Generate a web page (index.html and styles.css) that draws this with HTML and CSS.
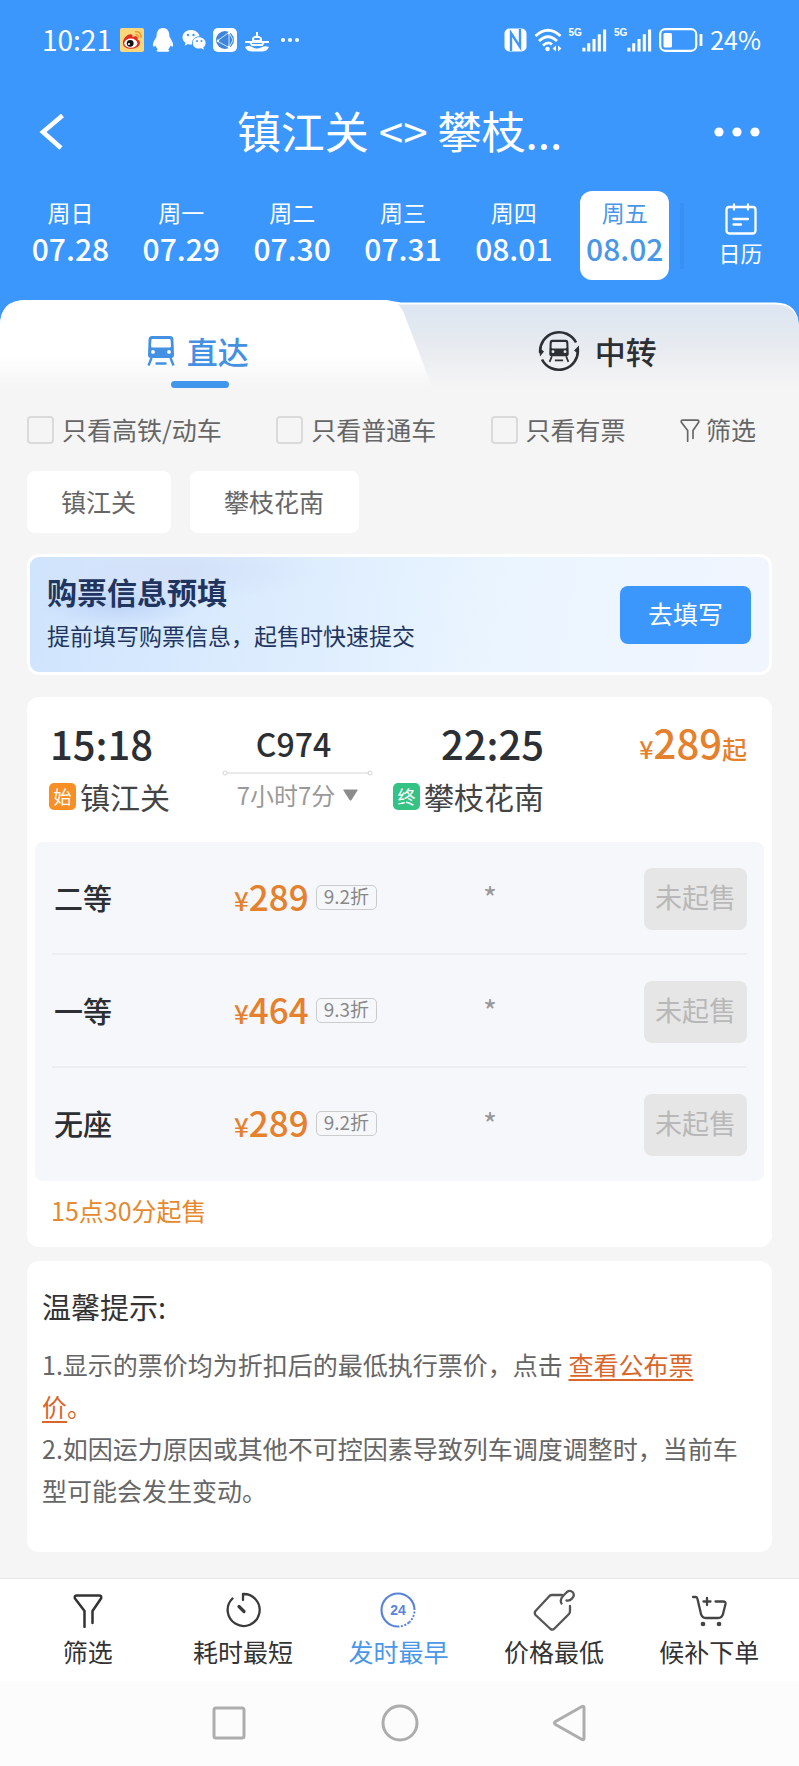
FILE: index.html
```html
<!DOCTYPE html>
<html lang="zh-CN">
<head>
<meta charset="utf-8">
<meta name="viewport" content="width=device-width, initial-scale=1">
<title>镇江关 - 攀枝花南 车票查询</title>
<link rel="stylesheet" href="styles.css">
</head>
<body>
<svg class="defs" aria-hidden="true">
  <symbol id="funnel" viewBox="0 0 30 34">
    <path d="M11.500 33V17L2 4.500Q1 1.500 4 1.500H26Q29 1.500 28 4.500L19.500 17V29" fill="none" stroke="currentColor" stroke-width="2.500" stroke-linecap="round" stroke-linejoin="round"/>
  </symbol>
  <symbol id="train" viewBox="0 0 28 30">
    <path fill="currentColor" fill-rule="evenodd" d="M5 0H23Q26 0 26.400 3L27 19Q27 22 24 22H4Q1 22 1 19L1.600 3Q2 0 5 0ZM5.500 3Q4.500 3 4.400 4L4 10Q4 11.500 5.500 11.500H22.500Q24 11.500 24 10L23.600 4Q23.500 3 22.500 3ZM6 14A1.900 1.900 0 1 0 6 17.800A1.900 1.900 0 1 0 6 14ZM22 14A1.900 1.900 0 1 0 22 17.800A1.900 1.900 0 1 0 22 14Z"/>
    <path d="M4.500 22L1.500 29.500M23.500 22L26.500 29.500M8.500 27.500H19.500" stroke="currentColor" stroke-width="2.400" fill="none"/>
  </symbol>
  <symbol id="signal" viewBox="0 0 26 24">
    <path d="M2 20V24M7 15.500V24M12.500 11V24M18 6V24M23.500 1V24" stroke="#fff" stroke-width="3.200"/>
  </symbol>
</svg>

<header class="header">
  <div class="status">
    <span class="clock">10:21</span>
    <div class="status-apps">
      <svg width="24" height="24" viewBox="0 0 24 24"><rect width="24" height="24" rx="2" fill="#fbd77c"/><path d="M3 16C2 11 8 5 11.500 6.500C13 7 12.500 9 12.500 9C16 7.500 18.500 8.500 17.500 11.500C23 14 19 20.500 11.500 20.800C7 21 3.500 19 3 16Z" fill="#e12d20"/><ellipse cx="10.800" cy="15.200" rx="6.500" ry="4.600" fill="#fff"/><circle cx="10.200" cy="15.300" r="3.400" fill="#111"/><circle cx="9" cy="16" r="1.100" fill="#fff"/><path d="M15 3.800Q21.500 3 21 10M15.500 6.500Q18.500 6.500 18.300 9.500" fill="none" stroke="#f09a2a" stroke-width="1.500"/></svg>
      <svg width="24" height="24" viewBox="0 0 24 24"><path d="M12 0C17 0 18.500 4 18.500 9C20 11 22.500 15 22 18C21.500 19.500 20 18 19.500 17.500C19 19.500 18 20.500 17 21.300C19 22 19 23.500 17 23.800H7C5 23.500 5 22 7 21.300C6 20.500 5 19.500 4.500 17.500C4 18 2.500 19.500 2 18C1.500 15 4 11 5.500 9C5.500 4 7 0 12 0Z" fill="#fff"/></svg>
      <svg width="24" height="24" viewBox="0 0 24 24"><path d="M9 2C4 2 .5 5.300 .5 9.300C.5 11.600 1.700 13.500 3.600 14.900L2.700 17.700L6 16Q8 16.700 10 16.500C9.500 11 14 8 17.600 8.200C17 4.600 13.200 2 9 2Z" fill="#fff"/><path d="M17 9.300C13 9.300 10.800 12 10.800 14.900C10.800 18 13.500 20.500 17 20.500L19.300 20.200L22 21.700L21.300 19.300C22.700 18.300 23.600 16.700 23.600 14.900C23.600 12 20.700 9.300 17 9.300Z" fill="#fff"/><g fill="#3c97fd"><circle cx="6" cy="7" r="1.200"/><circle cx="11.500" cy="7" r="1.200"/><circle cx="15" cy="13" r="1"/><circle cx="19.500" cy="13" r="1"/></g></svg>
      <svg width="24" height="24" viewBox="0 0 24 24"><rect width="24" height="24" rx="5" fill="#fff"/><circle cx="12" cy="12" r="9" fill="#3c87dd"/><path d="M4 13L16 4.500V19.500L4 13M16 4.500L20 12L16 19.500" fill="none" stroke="#fff" stroke-width=".8"/><circle cx="5" cy="12.800" r="1.200" fill="#fff"/><circle cx="16" cy="5" r="1.200" fill="#fff"/><circle cx="16" cy="19" r="1.200" fill="#fff"/></svg>
      <svg width="26" height="24" viewBox="0 0 26 24"><path d="M13 4V8M1 14H25M6 14L8 17H18L20 14" fill="none" stroke="#fff" stroke-width="2"/><path d="M8 13V10Q13 5 18 10V13Z" fill="#fff"/><rect x="10" y="10" width="6" height="2" rx="1" fill="#3c97fd"/><path d="M1 19Q5 17 9 19.500Q13 21.500 17 19.500Q21 17.500 25 19Q23 23.500 18 23.500H8Q3 23.500 1 19Z" fill="#fff"/></svg>
      <svg width="26" height="24" viewBox="0 0 26 24"><g fill="#fff"><circle cx="6" cy="12" r="2"/><circle cx="13" cy="12" r="2"/><circle cx="20" cy="12" r="2"/></g></svg>
    </div>
    <div class="status-system">
      <svg width="23" height="24" viewBox="0 0 23 24"><rect x=".5" y=".5" width="22" height="23" rx="5" fill="#fff"/><path d="M7 23V5L16 19V1" fill="none" stroke="#3c97fd" stroke-width="2.400"/></svg>
      <svg width="28" height="24" viewBox="0 0 28 24"><g fill="none" stroke="#fff" stroke-width="2.700"><path d="M1.500 8Q14 -3.500 26.500 8"/><path d="M5 13Q14 4.500 23 13"/><path d="M9 17.500Q14 13 18 16.500"/></g><circle cx="13.500" cy="21" r="2.300" fill="#fff"/><path d="M22 17.500V23.500L18.500 20.500ZM24 17.500V23.500L27.500 20.500Z" fill="#fff"/></svg>
      <span class="cell"><small>5G</small><svg width="25" height="24"><use href="#signal"/></svg></span>
      <span class="cell"><small>5G</small><svg width="25" height="24"><use href="#signal"/></svg></span>
      <svg width="44" height="24" viewBox="0 0 44 24"><rect x="1.200" y="1.200" width="36" height="21.600" rx="5" fill="none" stroke="#fff" stroke-width="2.200"/><rect x="4.500" y="5" width="8.500" height="14.500" rx="1.500" fill="#fff"/><path d="M42 6V18" stroke="#fff" stroke-width="2.800"/></svg>
      <span class="battery">24%</span>
    </div>
  </div>

  <nav class="titlebar">
    <button class="icon-btn" aria-label="返回"><svg width="26" height="36" viewBox="0 0 26 36"><path d="M23.500 1.500L4 18L22 34" fill="none" stroke="#fff" stroke-width="4.600"/></svg></button>
    <h1>镇江关 &lt;&gt; 攀枝...</h1>
    <button class="icon-btn" aria-label="更多"><svg width="46" height="36" viewBox="0 0 46 36"><g fill="#fff"><circle cx="5" cy="18" r="4.600"/><circle cx="23" cy="18" r="4.600"/><circle cx="41" cy="18" r="4.600"/></g></svg></button>
  </nav>

  <div class="dates">
    <button class="date"><span>周日</span><b>07.28</b></button>
    <button class="date"><span>周一</span><b>07.29</b></button>
    <button class="date"><span>周二</span><b>07.30</b></button>
    <button class="date"><span>周三</span><b>07.31</b></button>
    <button class="date"><span>周四</span><b>08.01</b></button>
    <button class="date active"><span>周五</span><b>08.02</b></button>
    <button class="calendar">
      <svg width="32" height="32" viewBox="0 0 32 32" fill="none" stroke="#fff" stroke-width="2.300" stroke-linecap="round"><path d="M4 4H5.500M12.500 4H19.500M26.500 4H28Q30.500 4 30.500 7V27.500Q30.500 30.500 27.500 30.500H4.500Q1.500 30.500 1.500 27.500V7Q1.500 4 4 4M5 4H27M9 1.500V6.500M23 1.500V6.500M8.500 16H23M8.500 21.500H16"/></svg>
      <span>日历</span>
    </button>
  </div>
</header>

<div class="tabs" role="tablist">
  <svg class="tabs-bg" viewBox="0 0 799 92" preserveAspectRatio="none" aria-hidden="true">
    <defs>
      <linearGradient id="idle" x2="0" y2="1"><stop offset=".05" stop-color="#dde6f1"/><stop offset=".5" stop-color="#e8ebf0"/><stop offset=".95" stop-color="#f5f5f5"/></linearGradient>
      <linearGradient id="on" x2="0" y2="1"><stop offset=".6" stop-color="#fff"/><stop offset=".95" stop-color="#f5f5f5"/></linearGradient>
    </defs>
    <path d="M0 92V26Q0 0 26 0H385L401 2.500H775Q799 2.500 799 28V92Z" fill="#fff"/>
    <path d="M380 92V4.500H775Q799 4.500 799 30V92Z" fill="url(#idle)"/>
    <path d="M0 92V26Q0 0 26 0H385Q397 0 403 11L434 92Z" fill="url(#on)"/>
  </svg>
  <button class="tab on" role="tab" aria-selected="true"><svg width="28" height="30"><use href="#train"/></svg>直达</button>
  <button class="tab" role="tab" aria-selected="false">
    <svg width="42" height="42" viewBox="0 0 42 42"><g fill="none" stroke="#2c2f33" stroke-width="2.600"><path d="M2.200 23A19 19 0 0 1 38 12.500"/><path d="M39.800 19A19 19 0 0 1 4 29.500"/></g><path d="M1 17.500L6 21.500L2 26.500ZM41 24.500L36 20.500L41 15.500Z" fill="#2c2f33"/><svg x="10.500" y="9" width="21" height="24" color="#2c2f33"><use href="#train"/></svg></svg>中转</button>
</div>

<main class="main">
  <div class="filters">
    <label><input type="checkbox"><span>只看高铁/动车</span></label>
    <label><input type="checkbox"><span>只看普通车</span></label>
    <label><input type="checkbox"><span>只看有票</span></label>
    <button class="filter-btn"><svg width="20" height="23"><use href="#funnel"/></svg><span>筛选</span></button>
  </div>

  <div class="chips">
    <button class="chip">镇江关</button>
    <button class="chip">攀枝花南</button>
  </div>

  <section class="banner">
    <div>
      <h2>购票信息预填</h2>
      <p>提前填写购票信息，起售时快速提交</p>
    </div>
    <button class="primary">去填写</button>
  </section>

  <section class="card trip">
    <div class="trip-head">
      <div class="stop">
        <span class="time">15:18</span>
        <span class="station"><i class="mark start">始</i>镇江关</span>
      </div>
      <div class="train">
        <span class="train-no">C974</span>
        <svg class="line" viewBox="0 0 151 6" preserveAspectRatio="none" aria-hidden="true"><g fill="#fff" stroke="#d4d4d4"><path d="M5 3H146"/><circle cx="3" cy="3" r="2"/><circle cx="148" cy="3" r="2"/></g></svg>
        <button class="duration">7小时7分<svg width="15" height="12" viewBox="0 0 15 12"><path d="M1 .5H14Q15 .5 14.500 1.500L8.500 11Q7.500 12 6.500 11L.5 1.500Q0 .5 1 .5Z" fill="#8c8c8c"/></svg></button>
      </div>
      <div class="stop end">
        <span class="time">22:25</span>
        <span class="station"><i class="mark final">终</i>攀枝花南</span>
      </div>
      <div class="from"><small>¥</small>289<em>起</em></div>
    </div>

    <table class="seats">
      <tbody>
        <tr><th scope="row">二等</th><td class="fare"><div><small>¥</small>289<span class="tag">9.2折</span></div></td><td class="left">*</td><td class="act"><button disabled>未起售</button></td></tr>
        <tr><th scope="row">一等</th><td class="fare"><div><small>¥</small>464<span class="tag">9.3折</span></div></td><td class="left">*</td><td class="act"><button disabled>未起售</button></td></tr>
        <tr><th scope="row">无座</th><td class="fare"><div><small>¥</small>289<span class="tag">9.2折</span></div></td><td class="left">*</td><td class="act"><button disabled>未起售</button></td></tr>
      </tbody>
    </table>
    <p class="sale">15点30分起售</p>
  </section>

  <section class="card tips">
    <h2>温馨提示:</h2>
    <p>1.显示的票价均为折扣后的最低执行票价，点击 <a href="#fares">查看公布票<br>价</a><span class="stop-mark">。</span></p>
    <p>2.如因运力原因或其他不可控因素导致列车调度调整时，当前车型可能会发生变动。</p>
  </section>
</main>

<footer>
  <nav class="sortbar">
    <button><svg width="30" height="36" viewBox="0 -2 30 36"><use href="#funnel" width="30" height="34"/></svg>筛选</button>
    <button><svg width="36" height="36" viewBox="0 0 36 36" fill="none" stroke="#3a3a3a" stroke-width="2.300" stroke-linecap="round" stroke-linejoin="round"><path d="M18 8V2A16 16 0 1 1 7.500 6.500"/><path d="M14 14.500L19 19.500" stroke-width="3.200"/></svg>耗时最短</button>
    <button class="on"><svg width="36" height="36" viewBox="0 0 36 36"><path d="M29 30.500A16.500 16.500 0 0 0 34.500 18" fill="none" stroke="#5b83da" stroke-width="2" stroke-dasharray="2 1.500"/><path d="M18 34.500A16.500 16.500 0 1 1 34.500 18" fill="none" stroke="#5b83da" stroke-width="2.200"/><path d="M29 30.500A16.500 16.500 0 0 1 18 34.500" fill="none" stroke="#5b83da" stroke-width="2" stroke-dasharray="2 1.500"/><text x="18" y="23" text-anchor="middle" class="h24">24</text></svg>发时最早</button>
    <button><svg width="42" height="42" viewBox="0 0 42 42" fill="none" stroke="#555" stroke-width="2.300" stroke-linecap="round" stroke-linejoin="round"><path d="M29 6H19Q17 6 16 7.500L2.500 22Q1 24 2.500 26L17.500 40Q19.500 41.500 21.500 39.500L36 25Q37 24 37 22V17"/><path d="M28.500 14.500Q26.500 11 30 7L34 3Q37 .5 40 3.500Q42 7 39 9.500Q37 12 33.500 11.500"/></svg>价格最低</button>
    <button><svg width="36" height="36" viewBox="0 0 36 36" fill="none" stroke="#444" stroke-width="2.300" stroke-linecap="round" stroke-linejoin="round"><path d="M2 5H5Q6 5 6.500 7L10 22Q11 26 15 26H27Q31 26 32 22L34.500 12Q35 9.500 32 9.500H24.500M12.500 9.500H19.500M16 6V13"/><circle cx="12" cy="32" r="1.200" fill="#444"/><circle cx="28" cy="32" r="1.200" fill="#444"/></svg>候补下单</button>
  </nav>
  <nav class="sysnav">
    <button aria-label="最近任务"><svg width="36" height="38" viewBox="0 0 36 38"><rect x="3" y="4" width="30" height="30" rx="2" fill="none" stroke="#adadad" stroke-width="3"/></svg></button>
    <button aria-label="主屏幕"><svg width="38" height="38" viewBox="0 0 38 38"><circle cx="19" cy="19" r="17" fill="none" stroke="#adadad" stroke-width="3"/></svg></button>
    <button aria-label="后退"><svg width="36" height="38" viewBox="0 0 36 38"><path d="M29 2.500Q31 1.500 31 4V34Q31 36.500 29 35.500L2.500 20.500Q.5 19 2.500 17.500Z" fill="none" stroke="#adadad" stroke-width="3"/></svg></button>
  </nav>
</footer>
</body>
</html>
```
FILE: styles.css
```css
* { box-sizing: border-box; margin: 0; padding: 0; }

body {
  background: #f5f5f5;
  color: #2c2f33;
  font-family: "Noto Sans CJK SC", "Noto Sans", sans-serif;
  font-size: 25px;
  line-height: 36px;
}

button {
  background: none;
  border: 0;
  color: inherit;
  font: inherit;
  cursor: pointer;
}

svg { display: block; flex: none; }
.defs { position: absolute; width: 0; height: 0; }

/* Header */
.header { background: #3c97fd; color: #fff; padding-bottom: 20px; }

.status {
  display: flex;
  align-items: center;
  height: 80px;
  padding: 0 38px 0 42px;
}
.clock { font-size: 28px; margin-right: 8px; padding-bottom: 3px; }
.status-apps { display: flex; gap: 7px; }
.status-system { display: flex; align-items: center; gap: 7px; margin-left: auto; }
.cell { display: flex; }
.cell small { font: bold 10px/10px "Liberation Sans", sans-serif; }
.battery { font-size: 25px; padding-bottom: 3px; }

.titlebar {
  display: flex;
  align-items: center;
  justify-content: space-between;
  height: 104px;
  padding: 0 39px 0 39px;
}
.titlebar h1 { font-size: 44px; font-weight: 400; line-height: 64px; padding-bottom: 4px; }
.icon-btn { display: flex; width: 46px; }

.dates {
  display: grid;
  grid-template-columns: repeat(6, 111fr) 117fr;
  align-items: center;
  justify-items: center;
  padding: 7px 2px 0 15px;
}
.date {
  display: flex;
  flex-direction: column;
  align-items: center;
  width: 89px;
  height: 89px;
  padding-top: 3px;
  border-radius: 12px;
}
.date span { font-size: 23px; }
.date b { font-size: 30px; font-weight: 500; }
.date.active { background: #fff; color: #4a97e8; }
.calendar {
  display: flex;
  flex-direction: column;
  align-items: center;
  justify-self: stretch;
  border-left: 4px solid #3890f3;
  font-size: 22px;
  line-height: 34px;
}

/* Tabs */
.tabs {
  position: relative;
  display: grid;
  grid-template-columns: 1fr 1fr;
  height: 92px;
  background: linear-gradient(#3c97fd 50%, #f5f5f5 50%);
}
.tabs-bg { position: absolute; inset: 0; width: 100%; height: 100%; }
.tab {
  position: relative;
  display: flex;
  align-items: center;
  justify-content: center;
  gap: 15px;
  height: 88px;
  padding: 13px 4px 0 0;
  font-size: 31px;
  font-weight: 500;
}
.tab.on { gap: 12px; color: #4490e2; }
.tab.on::after {
  content: "";
  position: absolute;
  bottom: 0;
  left: 50%;
  width: 58px;
  height: 7px;
  margin-left: -29px;
  border-radius: 4px;
  background: #4096ea;
}

/* Filters */
.main { padding: 19px 27px 26px; }

.filters {
  display: flex;
  align-items: center;
  justify-content: space-between;
  padding-right: 16px;
  color: #666;
}
.filters label { display: flex; align-items: center; gap: 8px; }
.filters span { padding-bottom: 2px; }
.filters input {
  appearance: none;
  width: 27px;
  height: 28px;
  border: 2px solid #dadada;
  border-radius: 4px;
}
.filter-btn { display: flex; align-items: center; gap: 6px; }

.chips { display: flex; gap: 19px; margin: 22px 0 21px; }
.chip {
  height: 62px;
  padding: 0 35px 3px 34px;
  border-radius: 8px;
  background: #fff;
  color: #666;
}

/* Banner */
.banner {
  display: flex;
  align-items: center;
  justify-content: space-between;
  height: 121px;
  padding: 0 18px 0 17px;
  border: 3px solid #fff;
  border-radius: 12px;
  background:
    radial-gradient(ellipse 80px 22px at 88px 48px, #bfd5f9, transparent),
    radial-gradient(ellipse 150px 30px at 140px 14px, #d3e0f8, transparent),
    linear-gradient(100deg, #cfe4fd 0%, #dfeefe 40%, #ebf5ff 65%, #f1f5fe 100%);
  color: #1f3560;
}
.banner h2 { font-size: 30px; font-weight: 700; line-height: 44px; }
.banner p { font-size: 23px; line-height: 44px; padding-bottom: 4px; }
.primary {
  width: 131px;
  height: 58px;
  padding-bottom: 3px;
  border-radius: 8px;
  background: #3c97fd;
  color: #fff;
}

/* Trip card */
.card { border-radius: 12px; background: #fff; }
.trip { margin-top: 22px; padding: 20px 8px 19px; }

.trip-head {
  display: grid;
  grid-template-columns: 173fr 151fr 171fr 203fr;
  padding: 0 17px 0 14px;
}
.stop { display: flex; flex-direction: column; align-items: flex-start; }
.stop.end { align-items: flex-end; justify-self: end; }
.time { font-size: 40px; font-weight: 500; line-height: 52px; padding-left: 1px; }
.station {
  display: flex;
  align-items: center;
  gap: 4px;
  font-size: 30px;
  line-height: 54px;
  color: #444;
}
.mark {
  width: 27px;
  border-radius: 5px;
  color: #fff;
  font-size: 18px;
  font-style: normal;
  line-height: 27px;
  text-align: center;
}
.mark.start { background: #f88f25; }
.mark.final { background: #34c285; }

.train { display: flex; flex-direction: column; align-items: center; }
.train-no { font-size: 32px; font-weight: 500; line-height: 53px; padding-right: 8px; }
.line { width: 100%; height: 6px; }
.duration {
  display: flex;
  align-items: center;
  gap: 8px;
  font-size: 24px;
  line-height: 38px;
  color: #999;
}

.from {
  justify-self: end;
  font-size: 40px;
  font-weight: 500;
  line-height: 50px;
  color: #e5802d;
}
.from small, .from em { font-size: 25px; font-style: normal; }

.seats {
  display: block;
  margin-top: 19px;
  padding: 0 17px;
  border-radius: 8px;
  background: #f6f7fb;
}
.seats tbody { display: block; }
.seats tr {
  display: grid;
  grid-template-columns: 182fr 210fr 92fr 211fr;
  align-items: center;
  height: 113px;
  padding-top: 2px;
  border-bottom: 2px solid #edeef2;
}
.seats tr:last-child { border-bottom-color: transparent; }
.seats th { padding: 0 0 4px 2px; font-size: 29px; font-weight: 500; text-align: left; }
.fare div {
  display: flex;
  align-items: baseline;
  padding-bottom: 2px;
  font-size: 35px;
  font-weight: 500;
  color: #e5802d;
}
.fare small { font-size: 26px; }
.tag {
  align-self: center;
  margin-left: 7px;
  padding: 0 7px 4px;
  border: 1px solid #ccc;
  border-radius: 5px;
  color: #888;
  font-size: 19px;
  font-weight: 400;
  line-height: 19px;
}
.left { padding-bottom: 4px; color: #999; font-size: 30px; text-align: center; }
.act { text-align: right; }
.act button {
  width: 103px;
  height: 62px;
  padding-bottom: 3px;
  border-radius: 8px;
  background: #e6e6e6;
  color: #b8b8b8;
  font-size: 27px;
  cursor: default;
}
.sale { padding: 11px 16px 0; color: #e5892f; }

/* Tips */
.tips { margin-top: 14px; padding: 22px 15px 41px; color: #666; }
.tips h2 {
  margin-bottom: 14px;
  color: #333;
  font-size: 29px;
  font-weight: 400;
  line-height: 46px;
}
.tips p { line-height: 42px; }
.tips a, .stop-mark { color: #d9662a; }
.tips a { text-underline-offset: 4px; text-decoration-thickness: 2px; }

/* Bottom bars */
.sortbar {
  display: grid;
  grid-template-columns: repeat(5, 1fr);
  height: 103px;
  padding: 10px 12px 0 10px;
  border-top: 1px solid #e8e8e8;
  background: #fff;
  color: #333;
}
.sortbar button {
  display: flex;
  flex-direction: column;
  align-items: center;
  justify-content: space-between;
  height: 80px;
}
.sortbar svg { height: 42px; }
.sortbar .on { color: #4a97e8; }
.h24 { font: bold 14px "Liberation Sans", sans-serif; fill: #5b83da; }

.sysnav {
  display: flex;
  justify-content: center;
  gap: 134px;
  padding: 23px 0 25px;
  background: #fcfcfc;
}
```
